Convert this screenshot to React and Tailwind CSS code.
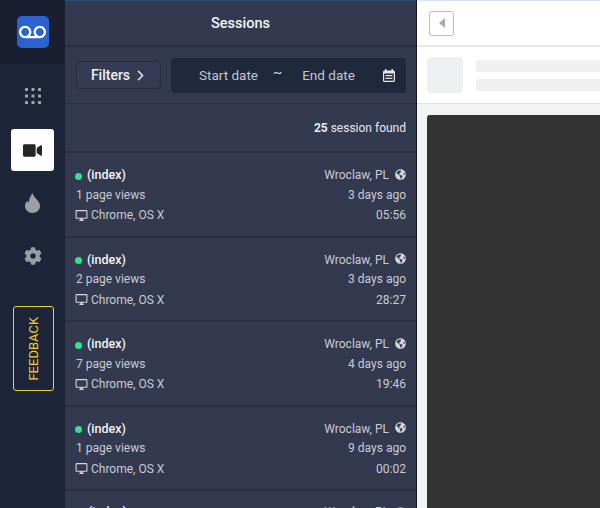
import React from "react";
import { MdVoicemail, MdOutlineDesktopWindows } from "react-icons/md";
import { FaVideo, FaCog, FaGlobeAmericas } from "react-icons/fa";
import { FiChevronRight } from "react-icons/fi";

const sessions = [
  { views: 1, ago: "3 days ago", time: "05:56" },
  { views: 2, ago: "3 days ago", time: "28:27" },
  { views: 7, ago: "4 days ago", time: "19:46" },
  { views: 1, ago: "9 days ago", time: "00:02" },
];

const GridDots = () => (
  <svg width="16" height="16" viewBox="0 0 16 16" fill="#9fa4b0">
    {[1.5, 8, 14.5].map((cy) =>
      [1.5, 8, 14.5].map((cx) => <rect key={`${cx}-${cy}`} x={cx - 1.5} y={cy - 1.5} width="3" height="3" rx="0.6" />)
    )}
  </svg>
);

const Flame = () => (
  <svg width="15" height="20" viewBox="0 0 15 20" fill="#9c9fa8">
    <path d="M7.5 0C8 2.5 9.8 4.3 11.8 6.6C13.8 8.9 15 10.8 15 13C15 17 11.6 20 7.5 20C3.4 20 0 17 0 13C0 11 1 9.3 2.4 7.8C2.7 8.6 3.2 9.2 3.9 9.5C3.9 6 5.6 2.8 7.5 0Z" />
  </svg>
);

const Calendar = () => (
  <svg width="12" height="13" viewBox="0 0 12 13" fill="#e4e6ea">
    <path d="M2 0h1.5v1.5h5V0H10v1.5h.5A1.5 1.5 0 0 1 12 3v8.5a1.5 1.5 0 0 1-1.5 1.5h-9A1.5 1.5 0 0 1 0 11.5V3a1.5 1.5 0 0 1 1.5-1.5H2V0ZM1.2 4.5v7c0 .2.1.3.3.3h9c.2 0 .3-.1.3-.3v-7H1.2Z" />
    <rect x="2.5" y="6" width="7" height="1.2" />
    <rect x="2.5" y="8.7" width="7" height="1.2" />
  </svg>
);

const SessionRow = ({ views, ago, time }) => (
  <div className="h-[84.5px] shrink-0 border-b-2 border-[#2a2f42] pl-[11px] pr-[10px] pt-[11px] flex justify-between text-[12px] leading-[20px] text-[#c9ccd4]">
    <div>
      <div className="flex items-center h-[20px] mt-[1px] text-[12.5px] font-medium text-[#f3f4f6]">
        <span className="w-[7px] h-[7px] rounded-full bg-[#2ee58c] -ml-[1px] mr-[5px] mt-[2px]" />
        (index)
      </div>
      <div className="h-[20px] -mt-[0.5px]">{views} page views</div>
      <div className="flex items-center h-[20px] mt-[0.5px]">
        <MdOutlineDesktopWindows className="text-[13px] -ml-[1px] mr-[3px] text-[#d5d7dd]" />
        Chrome, OS X
      </div>
    </div>
    <div className="flex flex-col items-end">
      <div className="flex items-center h-[20px] mt-[1px]">
        Wroclaw, PL
        <FaGlobeAmericas className="text-[11px] ml-[6px] -mt-[2px] text-[#d5d7dd]" />
      </div>
      <div className="h-[20px] -mt-[0.5px]">{ago}</div>
      <div className="h-[20px] mt-[0.5px]">{time}</div>
    </div>
  </div>
);

export default function App() {
  return (
    <div className="w-[600px] h-[508px] overflow-hidden flex font-['Roboto',sans-serif] bg-[#f2f3f5]">
      <div className="w-[65px] shrink-0 bg-[#1d2538] flex flex-col items-center">
        <div className="w-full h-[64px] bg-[#191f31] flex items-center justify-center">
          <div className="w-[32px] h-[32px] rounded-[5px] bg-[#2a63cf] flex items-center justify-center">
            <MdVoicemail className="text-[27px] text-white" />
          </div>
        </div>
        <div className="mt-[24px]">
          <GridDots />
        </div>
        <div className="mt-[25px] w-[43px] h-[42px] rounded-[3px] bg-white flex items-center justify-center">
          <FaVideo className="text-[19px] text-[#262626]" />
        </div>
        <div className="mt-[22px]">
          <Flame />
        </div>
        <FaCog className="mt-[34px] text-[18px] text-[#9a9da6]" />
        <div className="mt-[41px] ml-[2px] w-[41px] h-[85px] rounded-[3px] border border-[#f2ce2e] flex items-center justify-center">
          <span className="-rotate-90 text-[13px] text-[#f2ce2e]">FEEDBACK</span>
        </div>
      </div>

      <div className="w-[352px] shrink-0 bg-[#33394f] border-r border-[#14171f] border-t border-t-[#2f4a78] flex flex-col overflow-hidden">
        <div className="h-[46px] shrink-0 pt-[2px] flex items-center justify-center border-b-2 border-[#2a2f42] text-[14.5px] font-medium text-[#f3f4f6]">
          Sessions
        </div>
        <div className="h-[57px] shrink-0 border-b border-[#2a2f42] pl-[11px] pr-[10px] flex items-center justify-between">
          <div className="w-[85px] h-[28px] rounded-[4px] border border-[#272c3f] bg-[#343b52] flex items-center justify-center text-[14px] font-medium text-[#eef0f3]">
            <span className="ml-[3px]">Filters</span>
            <FiChevronRight className="text-[17px] ml-[2px]" />
          </div>
          <div className="w-[235px] h-[35px] rounded-[4px] bg-[#20283c] flex items-center pl-[28px] pr-[11px] text-[13.5px] text-[#c3c6ce] whitespace-nowrap">
            <span className="w-[57px]">Start date</span>
            <span className="ml-[17px] -mt-[6px] text-[#e4e6ea]">~</span>
            <span className="ml-[20px]">End date</span>
            <span className="ml-auto">
              <Calendar />
            </span>
          </div>
        </div>
        <div className="h-[49px] shrink-0 border-b-2 border-[#2a2f42] pr-[10px] flex items-center justify-end text-[12px] text-[#e7e9ed]">
          <span className="font-bold mr-[3px]">25</span> session found
        </div>
        {sessions.map((s, i) => (
          <SessionRow key={i} {...s} />
        ))}
        <div className="pl-[11px] pr-[10px] pt-[12px] flex justify-between text-[12px] text-[#c9ccd4]">
          <span className="pl-[12px] text-[12.5px] font-medium text-[#f3f4f6]">(index)</span>
          <span className="flex items-center">
            Wroclaw, PL
            <FaGlobeAmericas className="text-[11px] ml-[6px]" />
          </span>
        </div>
      </div>

      <div className="flex-1 min-w-0 flex flex-col">
        <div className="h-[47px] shrink-0 bg-white border-t border-[#d6e4f7] border-b-2 border-b-[#e6e6e6] pl-[12px] flex items-center">
          <div className="w-[25px] h-[25px] rounded-[3px] border border-[#bdbdbd] flex items-center justify-center">
            <div className="w-0 h-0 border-y-[5px] border-y-transparent border-r-[6px] border-r-[#aaaaaa]" />
          </div>
        </div>
        <div className="h-[57px] shrink-0 bg-white border-b border-[#e2e2e2] pl-[10px] flex items-center">
          <div className="w-[36px] h-[36px] rounded-[4px] bg-[#eeeff0]" />
          <div className="ml-[13px] flex-1 flex flex-col gap-[7px]">
            <div className="h-[12px] rounded-l-[3px] bg-[#f0f0f0]" />
            <div className="h-[12px] rounded-l-[3px] bg-[#f0f0f0]" />
          </div>
        </div>
        <div className="flex-1 pl-[10px] pt-[11px]">
          <div className="h-full rounded-tl-[3px] bg-[#333333]" />
        </div>
      </div>
    </div>
  );
}
